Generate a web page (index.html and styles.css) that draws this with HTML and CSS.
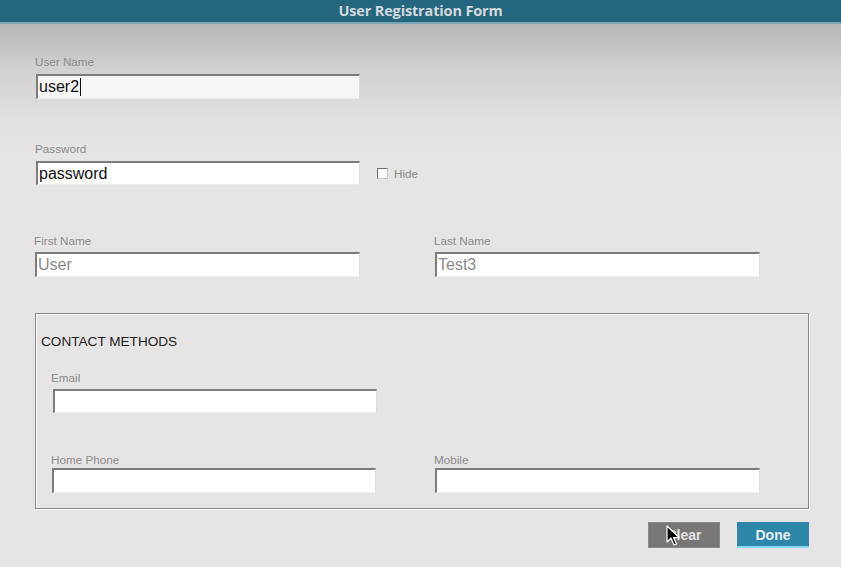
FILE: index.html
```html
<!DOCTYPE html>
<html>
<head>
<meta charset="utf-8">
<link rel="stylesheet" href="styles.css">
</head>
<body>
<div class="titlebar">User Registration Form</div>
<div class="form">
  <div class="group g-user">
    <div class="label">User Name</div>
    <div class="field f-user"><span class="val dark">user2</span><span class="caret"></span></div>
  </div>
  <div class="group g-pass">
    <div class="label">Password</div>
    <div class="pass-row">
      <div class="field f-pass"><span class="val dark">password</span></div>
      <div class="hide"><span class="check"></span><span class="hide-txt">Hide</span></div>
    </div>
  </div>
  <div class="group g-names">
    <div class="col">
      <div class="label">First Name</div>
      <div class="field f-wide"><span class="val grey">User</span></div>
    </div>
    <div class="col">
      <div class="label">Last Name</div>
      <div class="field f-wide"><span class="val grey">Test3</span></div>
    </div>
  </div>
  <div class="contact">
    <div class="contact-title">CONTACT METHODS</div>
    <div class="contact-body">
      <div class="label">Email</div>
      <div class="field f-email"></div>
      <div class="phones">
        <div class="col">
          <div class="label">Home Phone</div>
          <div class="field f-phone"></div>
        </div>
        <div class="col">
          <div class="label">Mobile</div>
          <div class="field f-phone"></div>
        </div>
      </div>
    </div>
  </div>
  <div class="buttons">
    <div class="btn btn-clear">Clear
      <svg class="cursor" width="14" height="22" viewBox="0 0 14 22"><path d="M1 1 L1 17 L5 13 L8 20 L10.5 19 L7.5 12.5 L13 12.5 Z" fill="#000" stroke="#fff" stroke-width="1.2" stroke-linejoin="round"/></svg>
    </div>
    <div class="btn btn-done">Done</div>
  </div>
</div>
</body>
</html>
```
FILE: styles.css
```css
html, body {
  margin: 0;
  padding: 0;
}
body {
  width: 841px;
  height: 567px;
  overflow: hidden;
  background: #e6e4e4;
  font-family: "Liberation Sans", Arial, sans-serif;
}
.titlebar {
  height: 22px;
  line-height: 22px;
  background: #25667f;
  border-bottom: 2px solid #78a6b6;
  color: #d3d9dc;
  font-family: "Open Sans", "Liberation Sans", sans-serif;
  font-weight: 700;
  font-size: 14.5px;
  letter-spacing: -0.15px;
  text-align: center;
}
.form {
  background: linear-gradient(#b8b7b7 0px, #d2d0d0 45px, #e2e0e0 95px, #e6e4e4 130px);
  padding: 31px 0 0 35px;
  height: 512px;
  box-sizing: border-box;
}
.label {
  font-size: 11.7px;
  line-height: 13px;
  height: 13px;
  color: #8c8c8c;
}
.field {
  box-sizing: border-box;
  height: 25px;
  background: #fff;
  border-top: 2px solid #7c7c7c;
  border-left: 2px solid #7c7c7c;
  border-right: 1px solid #dcdcdc;
  border-bottom: 1px solid #ececec;
  display: flex;
  align-items: center;
  padding-left: 1px;
}
.val {
  font-size: 16px;
  line-height: 18px;
}
.val.dark { color: #111; }
.val.grey { color: #8a8a8a; }
.caret {
  display: inline-block;
  width: 1px;
  height: 18px;
  background: #111;
  margin-left: 1px;
}
.g-user .label { margin-bottom: 6px; }
.f-user {
  width: 324px;
  margin-left: 1px;
  background: #f6f6f6;
}
.g-pass {
  margin-top: 43px;
}
.g-pass .label { margin-bottom: 6px; }
.pass-row {
  display: flex;
  align-items: center;
  padding-left: 1px;
}
.f-pass {
  width: 324px;
  height: 24px;
}
.hide {
  display: flex;
  align-items: center;
  margin-left: 17px;
  margin-top: 1px;
}
.check {
  box-sizing: border-box;
  width: 11px;
  height: 11px;
  background: #fff;
  border-top: 1px solid #6e6e6e;
  border-left: 1px solid #6e6e6e;
  border-right: 1px solid #c8c8c8;
  border-bottom: 1px solid #c8c8c8;
}
.hide-txt {
  margin-left: 6px;
  font-size: 11.7px;
  color: #8c8c8c;
}
.g-names {
  margin-top: 49px;
  margin-left: -1px;
  display: grid;
  grid-template-columns: 400px 325px;
}
.g-names .label { margin-bottom: 5px; }
.f-wide {
  width: 325px;
  margin-left: 1px;
}
.contact {
  margin-top: 36px;
  width: 774px;
  height: 196px;
  box-sizing: border-box;
  border: 1px solid #8a8a8a;
  box-shadow: 1px 1px 0 #fbfbfb, inset 1px 1px 0 #fbfbfb;
  padding: 21px 0 0 5px;
}
.contact-title {
  font-size: 13.6px;
  line-height: 14px;
  color: #1e1e1e;
}
.contact-body {
  padding-left: 10px;
  margin-top: 22px;
}
.contact-body > .label { margin-bottom: 5px; }
.f-email {
  width: 324px;
  height: 24px;
  margin-left: 2px;
}
.phones {
  margin-top: 40px;
  display: grid;
  grid-template-columns: 383px 325px;
}
.phones .label { margin-bottom: 2px; }
.f-phone {
  width: 324px;
  margin-left: 1px;
}
.phones .col:last-child .f-phone { width: 325px; }
.buttons {
  margin-top: 13px;
  width: 774px;
  display: flex;
  justify-content: flex-end;
  gap: 17px;
}
.btn {
  position: relative;
  width: 72px;
  height: 26px;
  box-sizing: border-box;
  display: flex;
  align-items: center;
  justify-content: center;
  font-weight: 700;
  font-size: 14px;
  color: #e9eef1;
}
.btn-clear {
  background: #797775;
  border: 1px solid #8a8886;
  color: #e2e2e2;
}
.btn-done {
  background: #2e86a8;
  border-bottom: 2px solid #86d6ee;
  padding-top: 1px;
}
.cursor {
  position: absolute;
  left: 17px;
  top: 2px;
}
```
